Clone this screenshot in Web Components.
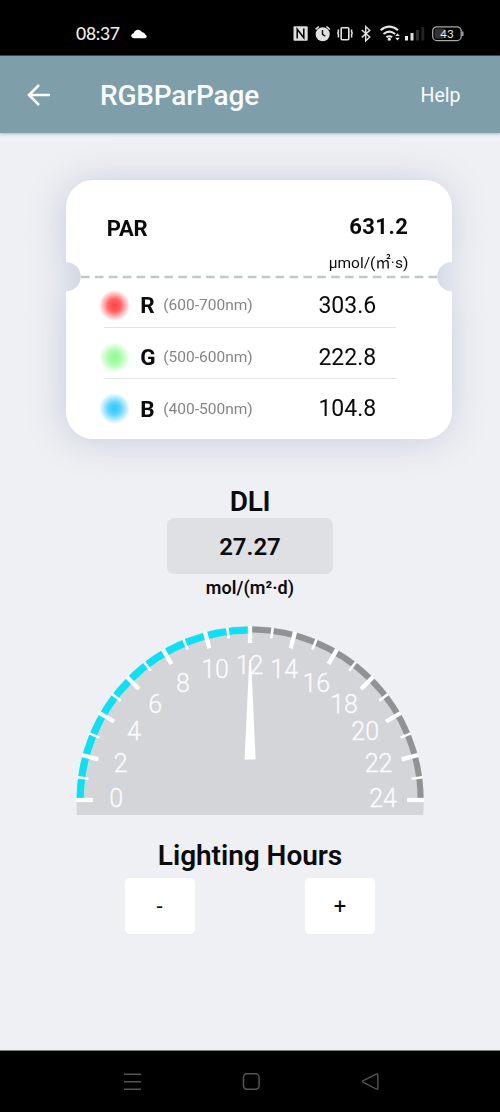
<!DOCTYPE html>
<html lang="en">
<head>
<meta charset="utf-8">
<title>RGBParPage</title>
<style>
html,body{margin:0;padding:0}
body{width:500px;height:1112px;overflow:hidden;background:#eff0f4;font-family:Roboto,"Noto Sans CJK SC",sans-serif;color:#0b0b0d}
</style>
</head>
<body>
<par-app></par-app>
<script>
const define = (name, html, setup) => customElements.define(name, class extends HTMLElement {
  constructor() {
    super();
    this.attachShadow({ mode: 'open' }).innerHTML = html;
  }
  connectedCallback() { if (setup) setup(this, this.shadowRoot); }
});

define('status-bar', `
<style>
:host{display:flex;box-sizing:border-box;height:56px;background:#000;border-bottom:1px solid #37464c;color:#eee;align-items:center;padding:12px 36px 0 76px;justify-content:space-between}
.left{display:flex;align-items:center;gap:11px}
.time{font:500 17.5px/22px Lato,sans-serif;letter-spacing:-.25px;width:44px;white-space:nowrap}
svg{display:block}
</style>
<div class="left"><span class="time">08:37</span>
<svg width="16" height="10" viewBox="0 0 16 10"><path d="M3.2 9.3C1.4 9.3.3 8.2.3 6.8.3 5.5 1.3 4.4 2.8 4.2 3.3 2 5 .7 7 .7c1.8 0 3.2.9 4 2.5 2 0 3 1 3.1 2.3 1 .3 1.6 1 1.6 1.9 0 1.1-.9 1.9-2.2 1.9z" fill="#fff"/></svg></div>
<svg width="172" height="20" viewBox="292 24 172 20" fill="none" stroke="#e4e4e4">
<rect x="293.5" y="26.3" width="14.2" height="14.4" rx="1" fill="#dedede" stroke="none"/>
<path d="M297.2 38.5V29.2l6.600 8.6V28.4" stroke="#000" stroke-width="1.5"/>
<circle cx="322.7" cy="34.3" r="7" fill="#e2e2e2" stroke="none"/>
<path d="M315.6 29.3l3.3-2.8M329.8 29.3l-3.3-2.8" stroke-width="1.6"/>
<path d="M322.5 30v4.3l2.8 2" stroke="#111" stroke-width="1.4"/>
<rect x="341.2" y="27.7" width="7.6" height="12" rx="1" stroke-width="1.6"/>
<path d="M338.400 29.500v2.500l-.6 1 .6 1.500v3M351.600 29.500v2.500l.6 1-.6 1.500v3" stroke-width="1.5"/>
<path d="M361.8 30l8 7-4.1 3.9V26.6l4.1 3.8-8 7" stroke-width="1.4"/>
<path d="M380.6 30.2q8.7-7 17.4 0M383.5 34q5.8-4.6 11.6 0M386.4 37.2q2.9-2 5.8 0" stroke-width="2.1"/>
<circle cx="389.3" cy="39.2" r="1.6" fill="#e4e4e4" stroke="none"/>
<path d="M395.2 36l2.3-2.7 2.3 2.7zM395.2 37.8l2.3 2.7 2.3-2.7z" fill="#e4e4e4" stroke="none"/>
<g stroke="none"><rect x="405" y="36" width="3" height="4.5" fill="#eee"/><rect x="410.5" y="33" width="3" height="7.5" fill="#ddd"/><rect x="416" y="30" width="3" height="10.5" fill="#2b2b2b"/><rect x="421.3" y="27" width="3" height="13.5" fill="#222"/></g>
<rect x="432.7" y="26.8" width="28.5" height="13.8" rx="4.2" stroke="#a9a9a9" stroke-width="1.3"/>
<rect x="434.6" y="28.6" width="10.5" height="10.2" rx="2.4" fill="#333" stroke="none"/>
<path d="M462.8 31.5v4.4" stroke="#aaa" stroke-width="1.4"/>
<text x="447" y="38" text-anchor="middle" font-family="Lato,sans-serif" font-size="11.5" fill="#eee" stroke="none">43</text>
</svg>`);

define('app-bar', `
<style>
:host{display:flex;align-items:center;box-sizing:border-box;height:77px;background:#7e9eaa;color:#f8fcfd;padding:0 39.5px 0 27px;box-shadow:0 1px 3px rgba(70,90,110,.4);position:relative}
svg{display:block;margin-right:50px}
h1{font:500 28px/34px Roboto,sans-serif;margin:2px 0 0;flex:1;letter-spacing:-.18px}
.help{font:400 19.5px/24px Roboto,sans-serif;margin-top:3px}
</style>
<svg width="23" height="22" viewBox="0 0 23 22" fill="none" stroke="#fff" stroke-width="2.5"><path d="M23 11H2.2M12 1L2 11l10 10"/></svg>
<h1><slot></slot></h1><span class="help"><slot name="action"></slot></span>`);

define('band-row', `
<style>
:host{display:flex;align-items:center;box-sizing:border-box;height:51.5px;width:292px;border-bottom:1.3px solid #e3e3e4}
:host([last]){border-color:transparent}
.dot{flex:none;width:31px;height:31px;margin-left:-5px;border-radius:50%;background:radial-gradient(circle closest-side,var(--c) 10%,var(--m) 40%,transparent 100%)}
b{flex:none;font-weight:700;font-size:22.5px;margin-left:10px;width:23px}
.range{flex:none;font-size:15.5px;color:#858587;width:120px;white-space:nowrap}
.value{font-size:23px;width:128px;text-align:center;flex:none}
</style>
<span class="dot"></span><b><slot></slot></b><span class="range"><slot name="range"></slot></span><span class="value"><slot name="value"></slot></span>`);

define('par-card', `
<style>
:host{display:block;position:relative;width:386px;height:259px;margin:47.4px 0 0 66.3px;filter:drop-shadow(-2px 2px 19px rgba(140,157,188,.42))}
.shape{position:absolute;inset:0}
.body{position:relative}
header{display:flex;justify-content:space-between;height:98.5px;box-sizing:border-box;padding:33px 44px 0 40.4px}
.name{font:700 22px/32px Roboto,sans-serif;letter-spacing:-.2px}
.total{display:flex;flex-direction:column;align-items:flex-end}
.total b{font:700 22px/28px Roboto,sans-serif;letter-spacing:.45px}
.unit{font-size:15.5px;line-height:24px;margin-top:10px;white-space:nowrap}
.rows{padding-left:38px}
</style>
<svg class="shape" width="386" height="259" viewBox="0 0 386 259"><path fill="#fff" d="M27 0H359a27 27 0 0 1 27 27V82a14.7 14.7 0 1 0 0 29.4V232a27 27 0 0 1-27 27H27a27 27 0 0 1-27-27V111.4a14.7 14.7 0 1 0 0-29.4V27A27 27 0 0 1 27 0z"/><path d="M15 97H371" stroke="#bec9cc" stroke-width="2.6" stroke-dasharray="8.6 5.3"/></svg>
<div class="body">
<header><span class="name">PAR</span><div class="total"><b>631.2</b><span class="unit">µmol/(㎡·s)</span></div></header>
<div class="rows">
<band-row style="height:49px;padding-top:4.5px;--c:#ff4949;--m:#ff6262">R<span slot="range">(600-700nm)</span><span slot="value">303.6</span></band-row>
<band-row style="padding-top:8px;--c:#96fa98;--m:#a9fca9">G<span slot="range">(500-600nm)</span><span slot="value">222.8</span></band-row>
<band-row last style="padding-top:8px;--c:#38caff;--m:#5cd3ff">B<span slot="range">(400-500nm)</span><span slot="value">104.8</span></band-row>
</div></div>`);

define('dli-panel', `
<style>
:host{display:flex;flex-direction:column;align-items:center;padding-top:46px}
h2{font:600 28px/34px Roboto,sans-serif;margin:0 0 -1px;letter-spacing:-.25px}
.value{width:166.5px;height:56px;border-radius:7px;background:#dfe0e3;display:flex;align-items:center;justify-content:center;font-weight:600;font-size:24px;box-sizing:border-box;padding-top:2px}
.unit{font-weight:600;font-size:18px;line-height:26px;letter-spacing:.08px;padding-top:1px;margin-bottom:-1px}
</style>
<h2>DLI</h2><div class="value">27.27</div><div class="unit">mol/(m²·d)</div>`);

define('hour-gauge', `
<style>:host{display:block;margin:25.6px 0 0 76px}svg{display:block}text{font-family:Roboto,sans-serif;font-size:25px;font-weight:300;fill:#fbfbfe;stroke:#fbfbfe;stroke-width:.3px;text-anchor:middle}</style>
<svg width="348" height="190" viewBox="76 626 348 190">
<path fill="#d4d5d8" d="M76.7 815V799.5a173.5 173.5 0 0 1 347 0q0 8-.5 15.5z"/>
<path fill="none" stroke="#0be0f5" stroke-width="7.2" d="M80.2 799.5A170 170 0 0 1 250 630"/>
<path fill="none" stroke="#919294" stroke-width="6" d="M250 629.5A170.5 170.5 0 0 1 420.6 799.5"/>
<g id="ticks" stroke="#fff"></g><g id="nums"></g>
<path fill="#fff" d="M249.3 660h1.8l4.5 99.5h-11z"/>
</svg>`, (host, root) => {
  const radians = a => a * Math.PI / 180;
  let ticks = '', nums = '';
  for (let i = 0; i <= 24; i++) {
    const a = radians(180 - i * 7.5), major = i % 2 === 0;
    const r1 = 174, r2 = major ? 157 : 163;
    ticks += `<line x1="${250 + r1 * Math.cos(a)}" y1="${800 - r1 * Math.sin(a)}" x2="${250 + r2 * Math.cos(a)}" y2="${800 - r2 * Math.sin(a)}" stroke-width="${major ? 4.3 : 2.6}"/>`;
    if (major) nums += `<text x="${249.6 + 133.5 * Math.cos(a)}" y="${806.8 - 133 * Math.sin(a)}">${i}</text>`;
  }
  root.querySelector('#ticks').innerHTML = ticks;
  root.querySelector('#nums').innerHTML = nums;
});

define('step-button', `
<style>:host{display:block}button{display:block;width:70px;height:56px;border:0;border-radius:5px;background:#fff;color:#0b0b0d;font:400 22px/56px Roboto,sans-serif;padding:1px 0 0;text-align:center}</style>
<button><slot></slot></button>`);

define('lighting-hours', `
<style>:host{display:block;padding-top:23px}h2{font:600 28px/34px Roboto,sans-serif;letter-spacing:-.04px;margin:0;text-align:center}
.row{display:flex;justify-content:space-between;padding:5px 125px 0 124.5px}</style>
<h2>Lighting Hours</h2><div class="row"><step-button>-</step-button><step-button>+</step-button></div>`);

define('nav-bar', `
<style>:host{display:flex;box-sizing:border-box;height:62px;background:#000;border-top:1px solid #777d80;justify-content:space-between;padding:21px 120px 0 123px}svg{display:block}</style>
<svg width="19" height="19" fill="none" stroke="#555" stroke-width="1.4"><path d="M1 2.3H18M1 9.8H18M1 17.3H18"/></svg>
<svg width="19" height="19" fill="none" stroke="#555" stroke-width="1.5"><rect x="1.5" y="1.7" width="15.6" height="15.6" rx="3.5"/></svg>
<svg width="19" height="19" fill="none" stroke="#555" stroke-width="1.4" stroke-linejoin="round"><path d="M15.2 2.2L2.3 8.6Q.7 9.5 2.3 10.4L15.2 17Q16.8 17.6 16.8 16V3.2Q16.8 1.6 15.2 2.2z"/></svg>`);

define('par-app', `
<style>:host{display:flex;flex-direction:column;width:500px;height:1112px;overflow:hidden;background:#eff0f4}main{flex:1}</style>
<status-bar></status-bar>
<app-bar>RGBParPage<span slot="action">Help</span></app-bar>
<main><par-card></par-card><dli-panel></dli-panel><hour-gauge></hour-gauge><lighting-hours></lighting-hours></main>
<nav-bar></nav-bar>`);
</script>
</body>
</html>
